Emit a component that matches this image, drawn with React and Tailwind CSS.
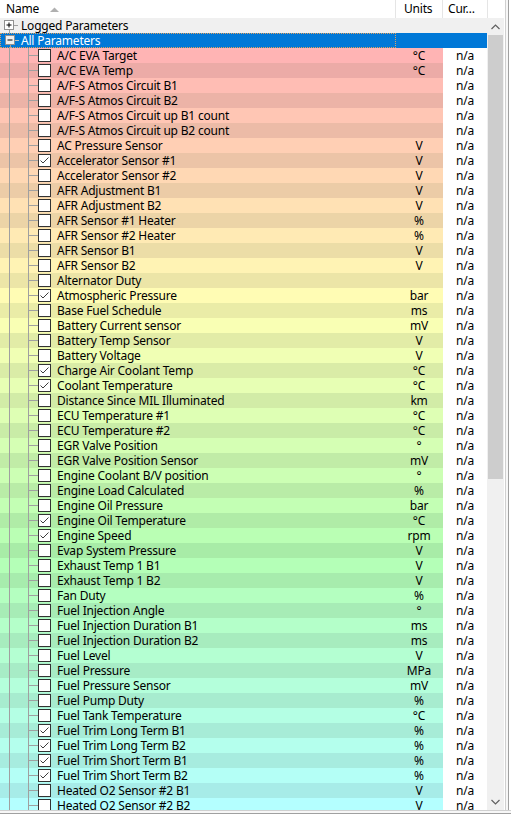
import React from "react";

const rows = [
  ["A/C EVA Target", "°C", false],
  ["A/C EVA Temp", "°C", false],
  ["A/F-S Atmos Circuit B1", "", false],
  ["A/F-S Atmos Circuit B2", "", false],
  ["A/F-S Atmos Circuit up B1 count", "", false],
  ["A/F-S Atmos Circuit up B2 count", "", false],
  ["AC Pressure Sensor", "V", false],
  ["Accelerator Sensor #1", "V", true],
  ["Accelerator Sensor #2", "V", false],
  ["AFR Adjustment B1", "V", false],
  ["AFR Adjustment B2", "V", false],
  ["AFR Sensor #1 Heater", "%", false],
  ["AFR Sensor #2 Heater", "%", false],
  ["AFR Sensor B1", "V", false],
  ["AFR Sensor B2", "V", false],
  ["Alternator Duty", "", false],
  ["Atmospheric Pressure", "bar", true],
  ["Base Fuel Schedule", "ms", false],
  ["Battery Current sensor", "mV", false],
  ["Battery Temp Sensor", "V", false],
  ["Battery Voltage", "V", false],
  ["Charge Air Coolant Temp", "°C", true],
  ["Coolant Temperature", "°C", true],
  ["Distance Since MIL Illuminated", "km", false],
  ["ECU Temperature #1", "°C", false],
  ["ECU Temperature #2", "°C", false],
  ["EGR Valve Position", "°", false],
  ["EGR Valve Position Sensor", "mV", false],
  ["Engine Coolant B/V position", "°", false],
  ["Engine Load Calculated", "%", false],
  ["Engine Oil Pressure", "bar", false],
  ["Engine Oil Temperature", "°C", true],
  ["Engine Speed", "rpm", true],
  ["Evap System Pressure", "V", false],
  ["Exhaust Temp 1 B1", "V", false],
  ["Exhaust Temp 1 B2", "V", false],
  ["Fan Duty", "%", false],
  ["Fuel Injection Angle", "°", false],
  ["Fuel Injection Duration B1", "ms", false],
  ["Fuel Injection Duration B2", "ms", false],
  ["Fuel Level", "V", false],
  ["Fuel Pressure", "MPa", false],
  ["Fuel Pressure Sensor", "mV", false],
  ["Fuel Pump Duty", "%", false],
  ["Fuel Tank Temperature", "°C", false],
  ["Fuel Trim Long Term B1", "%", true],
  ["Fuel Trim Long Term B2", "%", true],
  ["Fuel Trim Short Term B1", "%", true],
  ["Fuel Trim Short Term B2", "%", true],
  ["Heated O2 Sensor #2 B1", "V", false],
  ["Heated O2 Sensor #2 B2", "V", false],
];

function rowColor(i) {
  const h = i * 3.6;
  const s = 1;
  const l = 0.853;
  const c = (1 - Math.abs(2 * l - 1)) * s;
  const hp = h / 60;
  const x = c * (1 - Math.abs((hp % 2) - 1));
  let r = 0, g = 0, b = 0;
  if (hp < 1) [r, g, b] = [c, x, 0];
  else if (hp < 2) [r, g, b] = [x, c, 0];
  else if (hp < 3) [r, g, b] = [0, c, x];
  else if (hp < 4) [r, g, b] = [0, x, c];
  else if (hp < 5) [r, g, b] = [x, 0, c];
  else [r, g, b] = [c, 0, x];
  const m = l - c / 2;
  const f = i % 2 === 1 ? 0.925 : 1;
  const to = (v) => Math.round((v + m) * 255 * f);
  return `rgb(${to(r)}, ${to(g)}, ${to(b)})`;
}

function Check({ checked }) {
  return (
    <div className="w-[13px] h-[13px] shrink-0 border border-[#333333] bg-white">
      {checked && (
        <svg width="11" height="11" viewBox="0 0 11 11">
          <path d="M1.5 5.5 L4 8 L9.5 2.5" fill="none" stroke="#3c3c3c" strokeWidth="1" />
        </svg>
      )}
    </div>
  );
}

function TreeLines() {
  return (
    <svg width="38" height="15" className="shrink-0">
      <line x1="9.5" y1="0" x2="9.5" y2="15" stroke="#a0a0a0" strokeWidth="1" />
      <line x1="28.5" y1="0" x2="28.5" y2="15" stroke="#a0a0a0" strokeWidth="1" />
      <line x1="28" y1="7.5" x2="38" y2="7.5" stroke="#a0a0a0" strokeWidth="1" />
    </svg>
  );
}

function ExpandBox({ plus, onBlue }) {
  return (
    <svg width="18" height="15" className="shrink-0">
      <line x1="9.5" y1="11" x2="9.5" y2="15" stroke="#a0a0a0" />
      <line x1="13" y1="7.5" x2="18" y2="7.5" stroke={onBlue ? "#c0c0c0" : "#a0a0a0"} />
      <rect x="4.5" y="2.5" width="9" height="9" fill={onBlue ? "#f0f0f0" : "#ffffff"} stroke="#919191" />
      <line x1="6.5" y1="7" x2="11.5" y2="7" stroke="#000" />
      {plus && <line x1="9" y1="4.5" x2="9" y2="9.5" stroke="#000" />}
    </svg>
  );
}

function Row({ i, name, unit, checked }) {
  const bg = rowColor(i);
  return (
    <div className="flex h-[15px] shrink-0 leading-[15px]">
      <div className="w-[395px] flex items-center" style={{ backgroundColor: bg }}>
        <TreeLines />
        <Check checked={checked} />
        <span className="ml-[6px] whitespace-nowrap text-black">{name}</span>
      </div>
      <div className="w-[48px] text-center text-black" style={{ backgroundColor: bg }}>
        {unit}
      </div>
      <div className="w-[44px] text-center bg-white text-black">n/a</div>
    </div>
  );
}

export default function App() {
  return (
    <div
      className="w-[511px] h-[817px] bg-white flex flex-col overflow-hidden text-[12px] tracking-[-0.2px]"
      style={{ fontFamily: '"Noto Sans", "Open Sans", sans-serif' }}
    >
      <div className="flex h-[810px]">
        <div className="w-[504px] flex flex-col">
          <div className="flex h-[18px] shrink-0 bg-white text-black leading-[18px]">
            <div className="w-[396px] border-r border-[#e5e5e5] flex items-center pl-[6px]">
              <span>Name</span>
              <svg width="9" height="5" className="ml-[11px] mt-[1px]" viewBox="0 0 9 5">
                <path d="M0 5 L4.5 0.5 L9 5 Z" fill="#b0b0b0" />
              </svg>
            </div>
            <div className="w-[47px] border-r border-[#e5e5e5] pl-[8px]">Units</div>
            <div className="w-[45px] border-r border-[#e5e5e5] pl-[5px] whitespace-nowrap">Cur…</div>
            <div className="flex-1" />
          </div>
          <div className="flex flex-1 min-h-0">
            <div className="w-[487px] flex flex-col overflow-hidden">
              <div className="flex h-[15px] shrink-0 items-center bg-[#f0f0f0] leading-[15px]">
                <ExpandBox plus />
                <span className="ml-[3px] text-black">Logged Parameters</span>
              </div>
              <div className="flex h-[15px] shrink-0 bg-[#0078d7] leading-[15px]">
                <div className="w-[396px] flex items-center border border-dotted border-[#e0a060] box-border">
                  <ExpandBox onBlue />
                  <span className="ml-[2px] text-white">All Parameters</span>
                </div>
              </div>
              {rows.map(([n, u, c], i) => (
                <Row key={n} i={i} name={n} unit={u} checked={c} />
              ))}
            </div>
            <div className="w-[17px] bg-[#f0f0f0] flex flex-col">
              <div className="h-[17px] flex items-center justify-center">
                <svg width="9" height="6" viewBox="0 0 9 6">
                  <path d="M0.5 5 L4.5 1 L8.5 5" fill="none" stroke="#606060" strokeWidth="1.2" />
                </svg>
              </div>
              <div className="flex-1 flex flex-col px-[1px]">
                <div className="h-[444px] bg-[#cdcdcd]" />
              </div>
              <div className="h-[17px] flex items-center justify-center">
                <svg width="9" height="6" viewBox="0 0 9 6">
                  <path d="M0.5 1 L4.5 5 L8.5 1" fill="none" stroke="#606060" strokeWidth="1.2" />
                </svg>
              </div>
            </div>
          </div>
        </div>
        <div className="w-[7px] flex bg-[#f7f7f7]">
          <div className="w-[1px] bg-[#ffffff]" />
          <div className="w-[1px] bg-[#d0d0d0]" />
          <div className="w-[2px] bg-[#f7f7f7]" />
          <div className="w-[1px] bg-[#a0a0a0]" />
          <div className="flex-1 bg-[#ffffff]" />
        </div>
      </div>
      <div className="h-[7px] flex flex-col bg-[#f7f7f7]">
        <div className="h-[1px] bg-[#d0d0d0]" />
        <div className="h-[2px] bg-[#f7f7f7]" />
        <div className="h-[1px] bg-[#a0a0a0]" />
        <div className="flex-1 bg-white" />
      </div>
    </div>
  );
}
